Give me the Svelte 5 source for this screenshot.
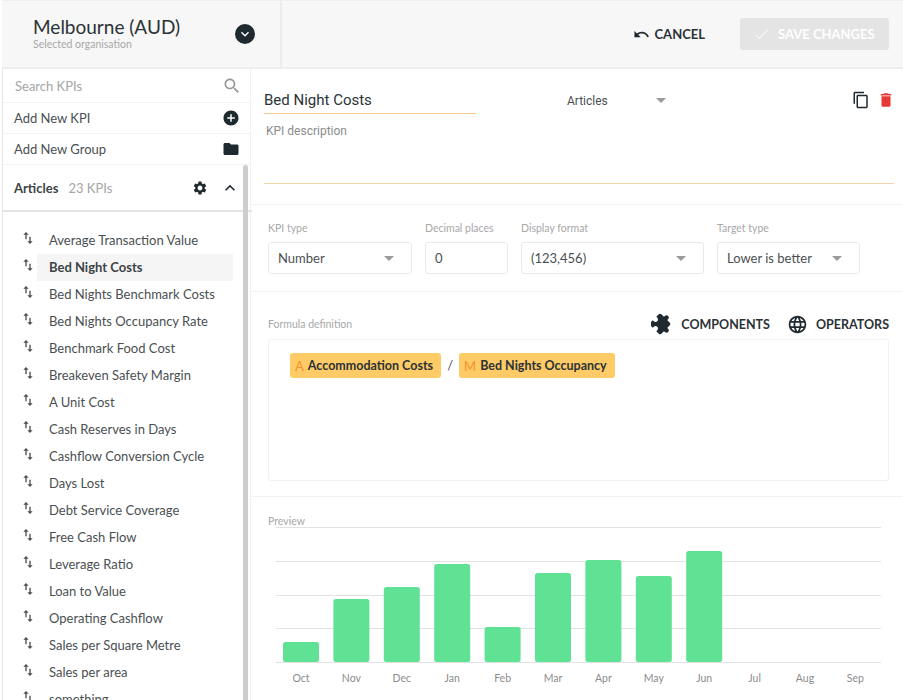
<script lang="ts">
    const kpis = [
        'Average Transaction Value', 'Bed Night Costs', 'Bed Nights Benchmark Costs', 'Bed Nights Occupancy Rate',
        'Benchmark Food Cost', 'Breakeven Safety Margin', 'A Unit Cost', 'Cash Reserves in Days',
        'Cashflow Conversion Cycle', 'Days Lost', 'Debt Service Coverage', 'Free Cash Flow',
        'Leverage Ratio', 'Loan to Value', 'Operating Cashflow', 'Sales per Square Metre',
        'Sales per area', 'something'
    ];
    const selected = 'Bed Night Costs';

    const months = [
        { m: 'Oct', top: 641 }, { m: 'Nov', top: 598 }, { m: 'Dec', top: 586 }, { m: 'Jan', top: 563 },
        { m: 'Feb', top: 626 }, { m: 'Mar', top: 572 }, { m: 'Apr', top: 559 }, { m: 'May', top: 575 },
        { m: 'Jun', top: 550 }, { m: 'Jul', top: 661 }, { m: 'Aug', top: 661 }, { m: 'Sep', top: 661 }
    ];
    const gridLines = [526, 560, 594, 627, 661];
    const chartTop = 516;
</script>

<div class="page">
    <header class="topbar">
        <div class="org">
            <div class="org-text">
                <div class="org-name">Melbourne (AUD)</div>
                <div class="org-sub">Selected organisation</div>
            </div>
            <span class="org-toggle">
                <svg viewBox="0 0 24 24" width="16" height="16"><path fill="#fff" d="M16.59 8.59L12 13.17 7.41 8.59 6 10l6 6 6-6z" /></svg>
            </span>
        </div>
        <div class="actions">
            <button class="cancel">
                <svg viewBox="0 0 24 24" width="17" height="17"><path fill="#1f2a30" d="M12.5 8c-2.65 0-5.05.99-6.9 2.6L2 7v9h9l-3.62-3.62c1.39-1.16 3.16-1.88 5.12-1.88 3.54 0 6.55 2.31 7.6 5.5l2.37-.78C21.08 11.03 17.15 8 12.5 8z" /></svg>
                CANCEL
            </button>
            <button class="save">
                <svg viewBox="0 0 24 24" width="19" height="19"><path fill="#fff" d="M9 16.17L4.83 12l-.7.7L9 17.6 20.6 6l-.7-.7z" /></svg>
                SAVE CHANGES
            </button>
        </div>
    </header>

    <div class="body">
        <aside class="sidebar">
            <div class="row search">
                <span>Search KPIs</span>
                <svg viewBox="0 0 24 24" width="20" height="20"><path fill="#9a9a9a" d="M15.5 14h-.79l-.28-.27C15.41 12.59 16 11.11 16 9.5 16 5.91 13.09 3 9.5 3S3 5.91 3 9.5 5.91 16 9.5 16c1.61 0 3.09-.59 4.23-1.57l.27.28v.79l5 4.99L20.49 19l-4.99-5zm-6 0C7.01 14 5 11.99 5 9.5S7.01 5 9.5 5 14 7.01 14 9.5 11.99 14 9.5 14z" /></svg>
            </div>
            <div class="row add">
                <span>Add New KPI</span>
                <svg viewBox="0 0 24 24" width="18" height="18"><path fill="#1f2a30" d="M12 2C6.48 2 2 6.48 2 12s4.48 10 10 10 10-4.48 10-10S17.52 2 12 2zm5 11h-4v4h-2v-4H7v-2h4V7h2v4h4v2z" /></svg>
            </div>
            <div class="row add">
                <span>Add New Group</span>
                <svg viewBox="0 0 24 24" width="18" height="18"><path fill="#1f2a30" d="M10 4H4c-1.1 0-1.99.9-1.99 2L2 18c0 1.1.9 2 2 2h16c1.1 0 2-.9 2-2V8c0-1.1-.9-2-2-2h-8l-2-2z" /></svg>
            </div>
            <div class="group">
                <b>Articles</b>
                <span class="count">23 KPIs</span>
                <svg class="gear" viewBox="0 0 24 24" width="16" height="16"><path fill="#1f2a30" d="M19.14 12.94c.04-.3.06-.61.06-.94 0-.32-.02-.64-.07-.94l2.03-1.58c.18-.14.23-.41.12-.61l-1.92-3.32c-.12-.22-.37-.29-.59-.22l-2.39.96c-.5-.38-1.03-.7-1.62-.94l-.36-2.54c-.04-.24-.24-.41-.48-.41h-3.84c-.24 0-.43.17-.47.41l-.36 2.54c-.59.24-1.13.57-1.62.94l-2.39-.96c-.22-.08-.47 0-.59.22L2.74 8.87c-.12.21-.08.47.12.61l2.03 1.58c-.05.3-.09.63-.09.94s.02.64.07.94l-2.03 1.58c-.18.14-.23.41-.12.61l1.92 3.32c.12.22.37.29.59.22l2.39-.96c.5.38 1.03.7 1.62.94l.36 2.54c.05.24.24.41.48.41h3.84c.24 0 .44-.17.47-.41l.36-2.54c.59-.24 1.13-.56 1.62-.94l2.39.96c.22.08.47 0 .59-.22l1.92-3.32c.12-.22.07-.47-.12-.61l-2.01-1.58zM12 15.6c-1.98 0-3.6-1.62-3.6-3.6s1.62-3.6 3.6-3.6 3.6 1.62 3.6 3.6-1.62 3.6-3.6 3.6z" /></svg>
                <svg viewBox="0 0 24 24" width="20" height="20"><path fill="#1f2a30" d="M12 8l-6 6 1.41 1.41L12 10.83l4.59 4.58L18 14z" /></svg>
            </div>
            <ul class="kpis">
                {#each kpis as kpi}
                    <li>
                        <svg class="sort" viewBox="0 0 24 24" width="16" height="16"><path fill="#4a4f52" d="M16 17.01V10h-2v7.01h-3L15 21l4-3.99h-3zM9 3L5 6.99h3V14h2V6.99h3L9 3z" /></svg>
                        <span class="kpi" class:active={kpi === selected}>{kpi}</span>
                    </li>
                {/each}
            </ul>
            <div class="scrollbar"></div>
        </aside>

        <main class="editor">
            <section class="head">
                <div class="title-row">
                    <div class="title">Bed Night Costs</div>
                    <div class="group-select">
                        <span>Articles</span>
                        <i class="caret"></i>
                    </div>
                    <div class="tools">
                        <svg viewBox="0 0 24 24" width="18" height="18"><path fill="#1f2a30" d="M16 1H4c-1.1 0-2 .9-2 2v14h2V3h12V1zm3 4H8c-1.1 0-2 .9-2 2v14c0 1.1.9 2 2 2h11c1.1 0 2-.9 2-2V7c0-1.1-.9-2-2-2zm0 16H8V7h11v14z" /></svg>
                        <svg viewBox="0 0 24 24" width="18" height="18"><path fill="#e53935" d="M6 19c0 1.1.9 2 2 2h8c1.1 0 2-.9 2-2V7H6v12zM19 4h-3.5l-1-1h-5l-1 1H5v2h14V4z" /></svg>
                    </div>
                </div>
                <div class="description">KPI description</div>
            </section>

            <section class="fields">
                <div class="field w-type">
                    <label>KPI type</label>
                    <div class="control"><span>Number</span><i class="caret"></i></div>
                </div>
                <div class="field w-dec">
                    <label>Decimal places</label>
                    <div class="control"><span>0</span></div>
                </div>
                <div class="field w-format">
                    <label>Display format</label>
                    <div class="control"><span>(123,456)</span><i class="caret"></i></div>
                </div>
                <div class="field w-target">
                    <label>Target type</label>
                    <div class="control"><span>Lower is better</span><i class="caret"></i></div>
                </div>
            </section>

            <section class="formula">
                <div class="formula-head">
                    <label>Formula definition</label>
                    <div class="formula-tools">
                        <span class="tool">
                            <svg viewBox="0 0 24 24" width="22" height="22"><path fill="#1f2a30" transform="rotate(45 12 12)" d="M20.5 11H19V7c0-1.1-.9-2-2-2h-4V3.5C13 2.12 11.88 1 10.5 1S8 2.12 8 3.5V5H4c-1.1 0-1.99.9-1.99 2v3.8H3.5c1.49 0 2.7 1.21 2.7 2.7s-1.21 2.7-2.7 2.7H2V20c0 1.1.9 2 2 2h3.8v-1.5c0-1.49 1.21-2.7 2.7-2.7 1.49 0 2.7 1.21 2.7 2.7V22H17c1.1 0 2-.9 2-2v-4h1.5c1.38 0 2.5-1.12 2.5-2.5S21.88 11 20.5 11z" /></svg>
                            COMPONENTS
                        </span>
                        <span class="tool">
                            <svg viewBox="0 0 24 24" width="21" height="21"><path fill="#1f2a30" d="M11.99 2C6.47 2 2 6.48 2 12s4.47 10 9.99 10C17.52 22 22 17.52 22 12S17.52 2 11.99 2zm6.93 6h-2.95c-.32-1.25-.78-2.45-1.38-3.56 1.84.63 3.37 1.91 4.33 3.56zM12 4.04c.83 1.2 1.48 2.53 1.91 3.96h-3.82c.43-1.43 1.08-2.76 1.91-3.96zM4.26 14C4.1 13.36 4 12.69 4 12s.1-1.36.26-2h3.38c-.08.66-.14 1.32-.14 2 0 .68.06 1.34.14 2H4.26zm.82 2h2.95c.32 1.25.78 2.45 1.38 3.56-1.84-.63-3.37-1.9-4.33-3.56zm2.95-8H5.08c.96-1.66 2.49-2.93 4.33-3.56C8.81 5.55 8.35 6.75 8.03 8zM12 19.96c-.83-1.2-1.48-2.53-1.91-3.96h3.82c-.43 1.43-1.08 2.76-1.91 3.96zM14.34 14H9.66c-.09-.66-.16-1.32-.16-2 0-.68.07-1.35.16-2h4.68c.09.65.16 1.32.16 2 0 .68-.07 1.34-.16 2zm.25 5.56c.6-1.11 1.06-2.31 1.38-3.56h2.95c-.96 1.65-2.49 2.93-4.33 3.56zM16.36 14c.08-.66.14-1.32.14-2 0-.68-.06-1.34-.14-2h3.38c.16.64.26 1.31.26 2s-.1 1.36-.26 2h-3.38z" /></svg>
                            OPERATORS
                        </span>
                    </div>
                </div>
                <div class="formula-box">
                    <span class="chip"><em>A</em>Accommodation Costs</span>
                    <span class="op">/</span>
                    <span class="chip"><em>M</em>Bed Nights Occupancy</span>
                </div>
            </section>

            <section class="preview">
                <label>Preview</label>
                <svg class="chart" width="653" height="184" viewBox="250 516 653 184">
                    {#each gridLines as y}
                        <line x1="276" x2="881" y1={y + 0.5} y2={y + 0.5} stroke="#e2e2e2" />
                    {/each}
                    {#each months as item, i}
                        {#if item.top < 661}
                            <rect x={283 + i * 50.4} y={item.top} width="36" height={661 - item.top} rx="2.5" fill="#5fe293" />
                        {/if}
                        <text x={301 + i * 50.4} y="681" text-anchor="middle">{item.m}</text>
                    {/each}
                </svg>
            </section>
        </main>
    </div>
</div>

<style>
    :global(body) {
        margin: 0;
        background: #fff;
        overflow: hidden;
    }
    .page {
        width: 903px;
        height: 700px;
        overflow: hidden;
        font-family: Lato, sans-serif;
        color: #4a4f52;
        box-sizing: border-box;
    }
    svg { display: block; flex: none; }

    .topbar {
        display: flex;
        height: 69px;
        box-sizing: border-box;
        background: #f7f7f7;
        border-top: 1px solid #eee;
        border-bottom: 2px solid #eee;
        margin-left: 2px;
    }
    .org {
        width: 280px;
        box-sizing: border-box;
        border-right: 2px solid #ececec;
        display: flex;
        align-items: center;
        justify-content: space-between;
        padding: 0 25px 0 31px;
    }
    .org-name { font-size: 19px; line-height: 23px; color: #2b3236; margin-top: -3px; }
    .org-sub { font-size: 10.5px; line-height: 12px; color: #a8a8a8; }
    .org-toggle {
        width: 20px;
        height: 20px;
        border-radius: 50%;
        background: #1f2a30;
        display: flex;
        align-items: center;
        justify-content: center;
    }
    .actions {
        flex: 1;
        display: flex;
        align-items: center;
        justify-content: flex-end;
        gap: 35px;
        padding-right: 14px;
    }
    button {
        border: 0;
        background: none;
        font: inherit;
        padding: 0;
        display: flex;
        align-items: center;
    }
    .cancel { font-size: 13px; font-weight: 700; color: #2b3236; gap: 5px; }
    .save {
        width: 149px;
        height: 32px;
        border-radius: 3px;
        background: #e4e4e4;
        color: #fff;
        font-size: 13px;
        font-weight: 700;
        gap: 7px;
        padding-left: 12px;
        box-sizing: border-box;
    }

    .body { display: flex; height: 631px; }

    .sidebar {
        position: relative;
        width: 250px;
        flex: none;
        margin-left: 2px;
        box-sizing: border-box;
        border-left: 1px solid #e6e6e6;
        font-size: 13px;
        overflow: hidden;
    }
    .row {
        display: flex;
        align-items: center;
        justify-content: space-between;
        padding: 0 12px 0 11px;
        border-bottom: 1px solid #f3f3f3;
    }
    .search { height: 33px; color: #a5a5a5; font-size: 13px; padding-right: 10px; }
    .search span { padding-left: 1px; }
    .add { height: 30px; color: #4a4f52; }
    .group {
        display: flex;
        align-items: center;
        height: 47px;
        padding: 0 12px 0 11px;
        box-sizing: border-box;
        border-bottom: 2px solid #e4e4e4;
        margin-right: 0;
    }
    .group b { font-weight: 700; color: #3d4347; }
    .count { margin-left: 10px; color: #a5a5a5; }
    .gear { margin-left: auto; margin-right: 12px; }

    .kpis { list-style: none; margin: 15px 0 0; padding: 0; }
    .kpis li { display: flex; align-items: center; height: 27px; padding-left: 17px; }
    .sort { margin-top: -5px; }
    .kpi {
        width: 196px;
        height: 27px;
        line-height: 27px;
        margin-left: 1px;
        padding-left: 12px;
        box-sizing: border-box;
        white-space: nowrap;
    }
    .kpi.active { background: #f5f5f5; font-weight: 700; color: #3d4347; }
    .scrollbar {
        position: absolute;
        left: 240px;
        top: 96px;
        bottom: 0;
        width: 5px;
        background: #cdcdcd;
        border-radius: 3px 3px 0 0;
    }

    .editor { flex: 1; min-width: 0; border-left: 1px solid #f1f1f1; margin-left: -2px; }
    section { border-bottom: 1px solid #f1f1f1; box-sizing: border-box; }
    label { display: block; font-size: 10.5px; color: #a8a8a8; }

    .head { height: 136px; padding: 0 9px 0 13px; }
    .title-row { display: flex; align-items: flex-start; padding-top: 20px; }
    .title {
        width: 212px;
        height: 25px;
        box-sizing: border-box;
        border-bottom: 1px solid #f7c88e;
        font-family: Roboto, sans-serif;
        font-size: 15px;
        line-height: 23px;
        color: #2b3236;
    }
    .group-select {
        display: flex;
        align-items: center;
        width: 99px;
        margin-left: 91px;
        height: 23px;
        justify-content: space-between;
        font-family: Roboto, sans-serif;
        font-size: 12px;
        color: #4a4f52;
    }
    .tools { margin-left: auto; display: flex; gap: 7px; margin-top: 2px; margin-right: -1px; }
    .description {
        margin-top: 6px;
        height: 59px;
        padding: 4px 2px 0;
        border-bottom: 1px solid #f7d5a8;
        font-family: Roboto, sans-serif;
        font-size: 12px;
        color: #8c8c8c;
    }
    .caret {
        width: 0;
        height: 0;
        border-left: 5px solid transparent;
        border-right: 5px solid transparent;
        border-top: 5px solid #9a9a9a;
    }

    .fields { display: flex; gap: 13px; height: 87px; padding: 17px 0 0 17px; }
    .field label { margin-bottom: 7px; line-height: 13px; }
    .control {
        display: flex;
        align-items: center;
        justify-content: space-between;
        height: 32px;
        box-sizing: border-box;
        border: 1px solid #e9e9e9;
        border-radius: 3px;
        padding: 0 17px 0 9px;
        font-size: 13px;
        color: #4a4f52;
    }
    .w-type { width: 144px; }
    .w-dec { width: 83px; }
    .w-format { width: 183px; }
    .w-target { width: 143px; }

    .formula { height: 205px; padding: 0 14px 0 17px; }
    .formula-head {
        display: flex;
        align-items: center;
        justify-content: space-between;
        height: 47px;
        padding-top: 17px;
        box-sizing: border-box;
    }
    .formula-tools { display: flex; gap: 17px; }
    .tool {
        display: flex;
        align-items: center;
        gap: 8px;
        font-size: 12.5px;
        font-weight: 700;
        color: #2b3236;
    }
    .formula-box {
        height: 142px;
        box-sizing: border-box;
        border: 1px solid #f1f1f1;
        border-radius: 3px;
        padding: 13px 0 0 21px;
        display: flex;
        align-items: flex-start;
    }
    .chip {
        display: flex;
        align-items: center;
        height: 25px;
        padding: 0 8px 0 5px;
        border-radius: 3px;
        background: #ffcb66;
        font-size: 12.5px;
        font-weight: 700;
        color: #2b3236;
        white-space: nowrap;
    }
    .chip em { font-style: normal; font-weight: 400; color: #f5932e; margin-right: 4px; font-size: 13px; }
    .op { width: 18px; text-align: center; line-height: 25px; font-size: 13px; }

    .preview { position: relative; border-bottom: 0; height: 204px; }
    .preview label { padding: 18px 0 0 17px; line-height: 13px; }
    .chart { position: absolute; left: -1px; top: 20px; }
    .chart text { font-size: 10.5px; fill: #8c8c8c; font-family: Lato, sans-serif; }
</style>
